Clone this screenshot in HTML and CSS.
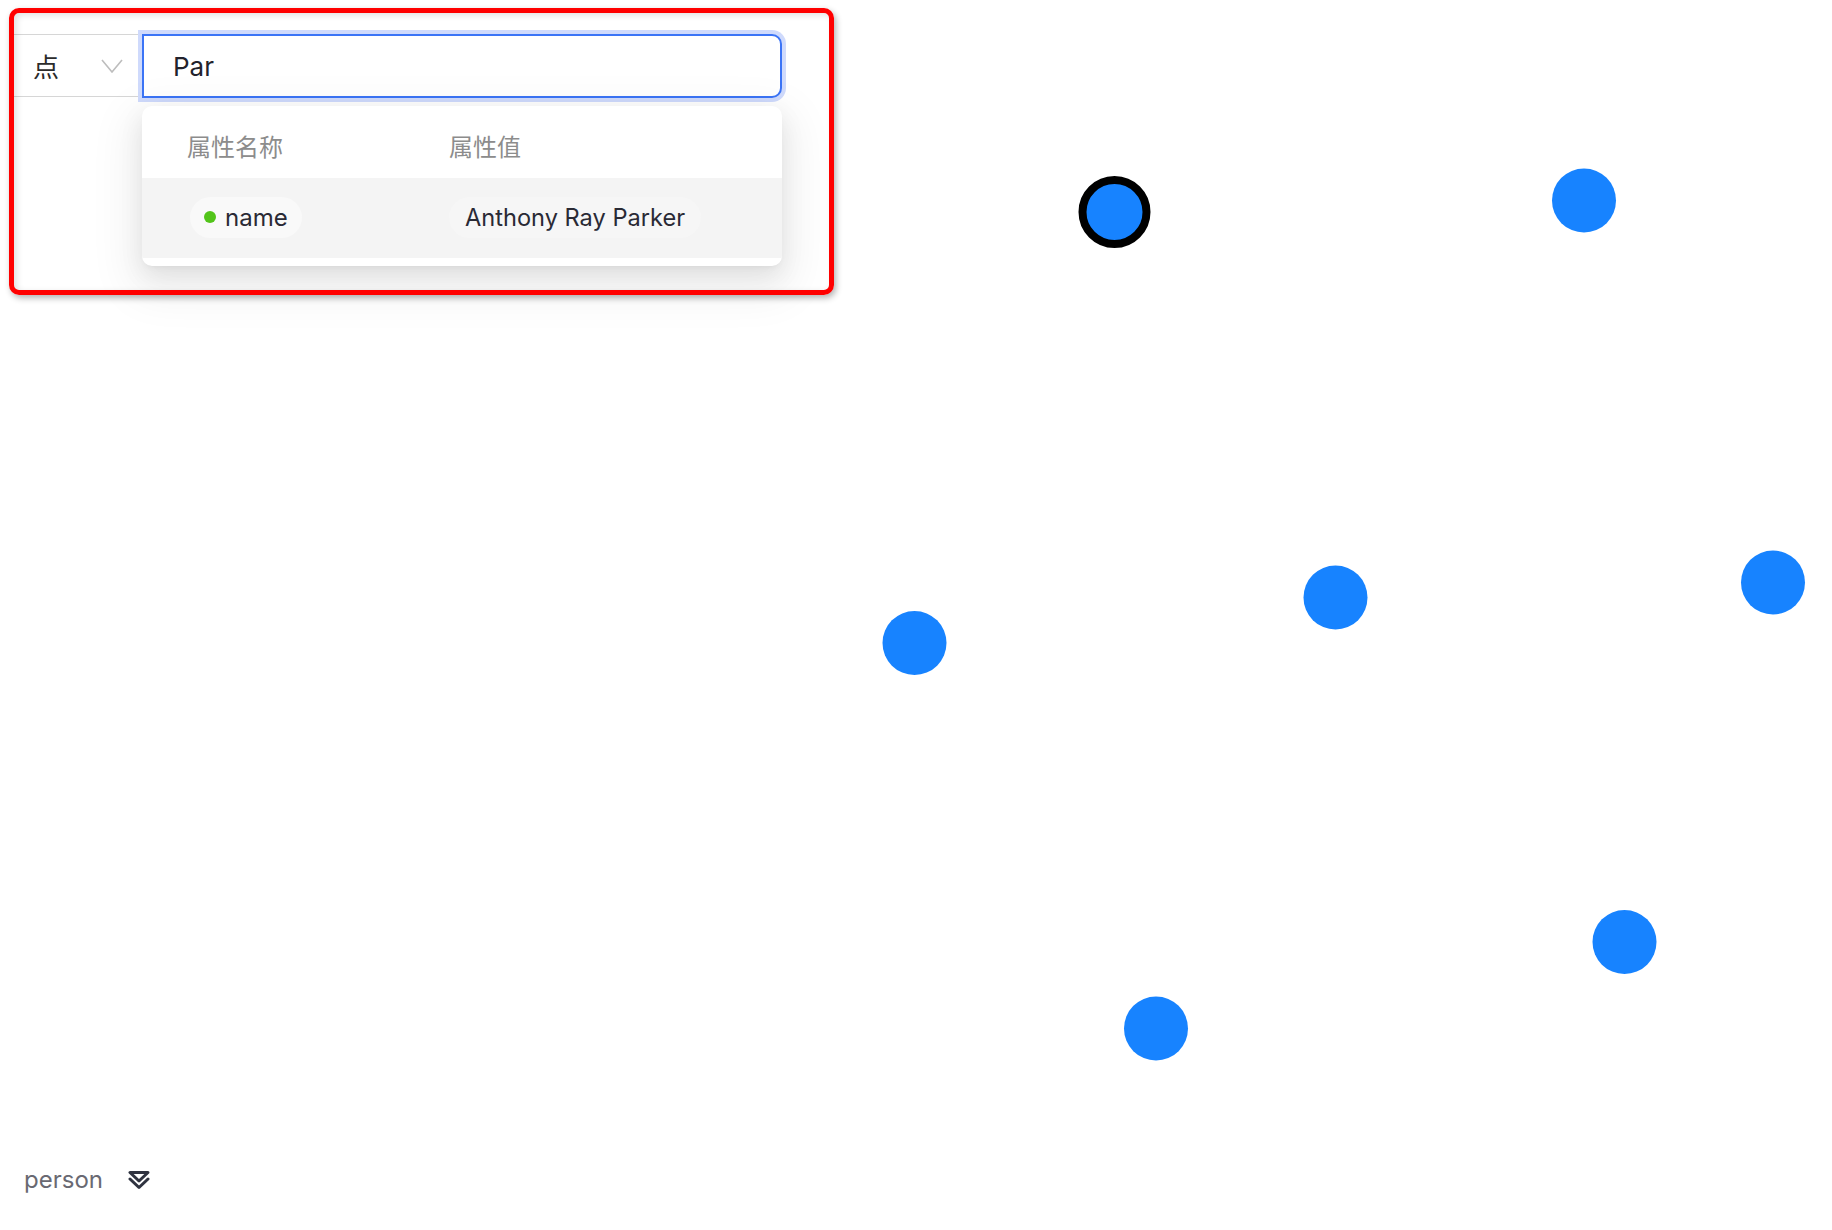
FILE: index.html
```html
<!DOCTYPE html>
<html lang="zh">
<head>
<meta charset="utf-8">
<title>Graph search</title>
<link rel="stylesheet" href="styles.css">
</head>
<body>
<div class="stage">
  <svg class="graph" width="1832" height="1230" viewBox="0 0 1832 1230">
    <circle class="node selected" cx="1114.5" cy="212" r="32"/>
    <circle class="node" cx="1584" cy="200.5" r="32"/>
    <circle class="node" cx="914.5" cy="643" r="32"/>
    <circle class="node" cx="1335.5" cy="597.5" r="32"/>
    <circle class="node" cx="1773" cy="582.5" r="32"/>
    <circle class="node" cx="1624.5" cy="942" r="32"/>
    <circle class="node" cx="1156" cy="1028.5" r="32"/>
  </svg>

  <div class="search">
    <div class="select">
      <span class="select-value">点</span>
      <svg class="chev" width="22" height="14" viewBox="0 0 22 14"><polyline points="1,1 11,13 21,1"/></svg>
    </div>
    <div class="input">Par</div>
    <div class="dropdown">
      <div class="dd-head">
        <span class="col-name">属性名称</span>
        <span class="col-val">属性值</span>
      </div>
      <div class="dd-row">
        <div class="cell-name"><span class="pill"><span class="dot"></span>name</span></div>
        <div class="cell-val"><span class="pill pill-val">Anthony Ray Parker</span></div>
      </div>
    </div>
  </div>

  <div class="annot"></div>

  <div class="legend">
    <span class="legend-label">person</span>
    <svg class="legend-icon" width="22" height="20" viewBox="0 0 22 20"><path d="M2 2.5 H20 L11 11 Z"/><path d="M2 9 L11 17.5 L20 9"/></svg>
  </div>
</div>
</body>
</html>
```

FILE: styles.css
```css
* { box-sizing: border-box; }
html, body { margin: 0; padding: 0; background: #fff; }
body { font-family: Inter, "Noto Sans CJK SC", sans-serif; }

.stage {
  position: relative;
  width: 1832px;
  height: 1230px;
  overflow: hidden;
  background: #fff;
}

.graph { position: absolute; left: 0; top: 0; }
.node { fill: #1783ff; }
.node.selected { stroke: #000; stroke-width: 8; }

.search {
  position: absolute;
  left: 10px;
  top: 34px;
  display: flex;
  align-items: flex-start;
}

.select {
  width: 132px;
  height: 63px;
  border: 1px solid #d6d6d6;
  border-right: none;
  display: flex;
  align-items: center;
  padding-left: 22px;
}
.select-value {
  font-family: "Noto Sans CJK SC", sans-serif;
  font-size: 26px;
  color: #2b2b2b;
  width: 68px;
}
.chev polyline {
  fill: none;
  stroke: #bdbdbd;
  stroke-width: 1.6;
}

.input {
  width: 640px;
  height: 64px;
  border: 2px solid #3b74f6;
  border-radius: 0 10px 10px 0;
  box-shadow: 0 0 0 4px #cfdafc;
  padding-left: 29px;
  display: flex;
  align-items: center;
  font-size: 26px;
  color: #22222c;
  background: #fff;
}

.dropdown {
  position: absolute;
  left: 132px;
  top: 72px;
  width: 640px;
  background: #fff;
  border-radius: 10px;
  overflow: hidden;
  padding-bottom: 8px;
  box-shadow: 0 9px 24px 0 rgba(0,0,0,0.08), 0 4px 9px -6px rgba(0,0,0,0.12), 0 16px 44px 14px rgba(0,0,0,0.06);
}
.dd-head {
  height: 72px;
  padding-top: 6px;
  display: flex;
  align-items: center;
  font-size: 24px;
  color: #8c8c8c;
  font-family: "Noto Sans CJK SC", sans-serif;
}
.col-name { width: 307px; padding-left: 45px; }

.dd-row {
  height: 80px;
  background: #f4f4f4;
  display: flex;
  align-items: center;
  padding-bottom: 2px;
}
.cell-name { width: 307px; padding-left: 48px; }
.pill {
  display: inline-flex;
  align-items: center;
  height: 41px;
  padding: 0 14px;
  border-radius: 21px;
  background: #f9f9f9;
  font-size: 24px;
  color: #2a2a35;
  gap: 9px;
}
.pill-val { padding: 0 16px; background: #f6f6f6; font-size: 23.6px; }
.dot {
  width: 12px;
  height: 12px;
  border-radius: 50%;
  background: #52c41a;
}

.annot {
  position: absolute;
  left: 9px;
  top: 8px;
  width: 825px;
  height: 287px;
  border: 5px solid #ff0000;
  border-radius: 10px;
  box-shadow: 2px 3px 6px rgba(0,0,0,0.3), inset 3px 2px 6px rgba(0,0,0,0.12);
  pointer-events: none;
}

.legend {
  position: absolute;
  left: 24px;
  top: 1165px;
  display: flex;
  align-items: center;
  gap: 25px;
  height: 30px;
}
.legend-label {
  font-size: 24px;
  line-height: 30px;
  color: #696972;
}
.legend-icon path {
  fill: none;
  stroke: #2f3340;
  stroke-width: 3;
  stroke-linejoin: round;
  stroke-linecap: round;
}
```
